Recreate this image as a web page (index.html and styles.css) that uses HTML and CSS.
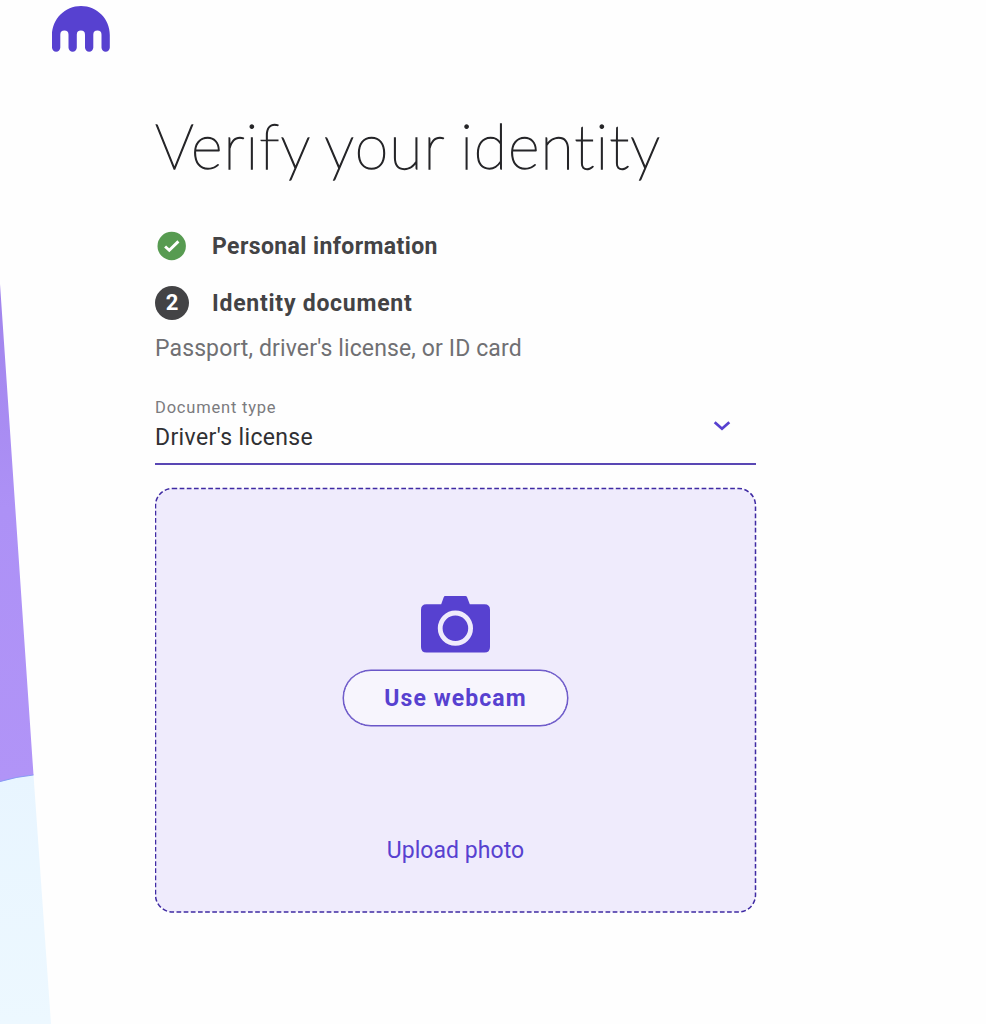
FILE: index.html
```html
<!DOCTYPE html>
<html lang="en">
<head>
<meta charset="utf-8">
<title>Verify your identity</title>
<link rel="stylesheet" href="styles.css">
</head>
<body>
<svg class="backdrop" viewBox="0 0 60 1024" aria-hidden="true">
  <defs>
    <linearGradient id="violet" x1="0" y1="0" x2="0" y2="1"><stop offset="0" stop-color="#a184ec"/><stop offset=".45" stop-color="#ad91f6"/><stop offset="1" stop-color="#b194f7"/></linearGradient>
    <linearGradient id="sky" x1="0" y1="0" x2="0" y2="1"><stop offset="0" stop-color="#e8f5ff"/><stop offset="1" stop-color="#edf8ff"/></linearGradient>
  </defs>
  <path d="M0 284L33.5 775Q17 777 0 782Z" fill="url(#violet)"/>
  <path d="M0 782Q17 777 33.5 775L51 1024H0Z" fill="url(#sky)"/>
  <path d="M0 781.5Q17 776.5 33.5 775" fill="none" stroke="#879cf5"/>
</svg>
<header class="header">
  <svg class="logo" viewBox="0 0 58 46" role="img" aria-label="Kraken">
    <path fill="#5741d0" d="M29 0C13 0 0 13 0 29V41.500a4.150 4.150 0 0 0 8.300 0V28.700a4.100 4.100 0 0 1 8.200 0V41.500a4.150 4.150 0 0 0 8.300 0V28.700a4.100 4.100 0 0 1 8.200 0V41.500a4.150 4.150 0 0 0 8.300 0V28.700a4.100 4.100 0 0 1 8.200 0V41.500a4.150 4.150 0 0 0 8.300 0V29C58 13 45 0 29 0Z"/>
  </svg>
</header>
<main class="content">
  <h1 class="title">Verify your identity</h1>
  <ol class="steps">
    <li class="step">
      <svg class="marker" viewBox="0 0 34 34" aria-hidden="true"><circle cx="16.700" cy="17" r="14.200" fill="#579b51"/><path d="M10.100 17.500L14.300 21.300L23.400 12.400" fill="none" stroke="#fff" stroke-width="2.900"/></svg>
      <span class="label label-done">Personal information</span>
    </li>
    <li class="step">
      <span class="marker number">2</span>
      <span class="label label-current">Identity document</span>
    </li>
  </ol>
  <p class="hint">Passport, driver's license, or ID card</p>
  <div class="select">
    <div class="select-text">
      <span class="select-label">Document type</span>
      <span class="select-value">Driver's license</span>
    </div>
    <svg class="chevron" viewBox="0 0 18 12" aria-hidden="true"><path d="M1.700 2.300L9 8.700L16.300 2.300" fill="none" stroke="#5741d0" stroke-width="2.800"/></svg>
  </div>
  <section class="dropzone">
    <svg class="outline" viewBox="0 0 602 426" aria-hidden="true"><rect x=".5" y="1.500" width="600" height="423.500" rx="17" fill="#efebfc" stroke="#3f2ba3" stroke-width="1.500" stroke-dasharray="4.700 2.450"/></svg>
    <svg class="camera" viewBox="0 0 69 57" aria-hidden="true"><path fill="#5741d0" d="M24 0H44.500Q45.500 0 46 1L48.800 8.200H63.500Q69 8.200 69 13.700V51Q69 56.500 63.500 56.500H5.500Q0 56.500 0 51V13.700Q0 8.200 5.500 8.200H20.200L22.800 1Q23.200 0 24 0Z"/><circle cx="34.400" cy="32.200" r="15.200" fill="none" stroke="#efebfc" stroke-width="4.800"/></svg>
    <button class="webcam">Use webcam</button>
    <a class="upload">Upload photo</a>
  </section>
</main>
</body>
</html>
```
FILE: styles.css
```css
* { box-sizing: border-box; }
body {
  margin: 0;
  height: 1024px;
  overflow: hidden;
  background: #fefefe;
  font-family: Roboto, "Liberation Sans", sans-serif;
  color: #303033;
}
.backdrop { position: absolute; left: 0; top: 0; width: 60px; height: 1024px; }
.header { height: 100px; padding: 6px 0 0 52px; }
.logo { display: block; width: 58px; height: 46px; }
.content { width: 601px; margin-left: 155px; }
.title {
  margin: 0;
  height: 129px;
  padding-top: 8px;
  font: 100 61px/76px Lato, sans-serif;
  letter-spacing: 1.05px;
  word-spacing: -2.5px;
  white-space: nowrap;
  color: #252528;
  -webkit-text-stroke: 1.3px #252528;
}
.steps { margin: 0; padding: 0; list-style: none; display: flex; flex-direction: column; gap: 23px; }
.step { display: flex; align-items: center; gap: 23px; height: 34px; }
.marker { width: 34px; height: 34px; flex: none; }
.number {
  border-radius: 50%;
  background: #434345;
  color: #fff;
  font-size: 22px;
  font-weight: 700;
  line-height: 34px;
  text-align: center;
}
.label { font-size: 23px; font-weight: 700; color: #434345; white-space: nowrap; }
.label-done { letter-spacing: .4px; }
.label-current { letter-spacing: .75px; }
.hint { margin: 14px 0 0; font-size: 23px; line-height: 30px; letter-spacing: .12px; color: #707073; white-space: nowrap; }
.select {
  display: flex;
  justify-content: space-between;
  height: 68px;
  margin-top: 33px;
  padding-right: 25px;
  border-bottom: 2px solid #5947b4;
}
.select-text { display: flex; flex-direction: column; }
.select-label { font-size: 16.5px; line-height: 22px; letter-spacing: .8px; color: #7b7b7e; }
.select-value { margin-top: 4px; font-size: 23px; line-height: 30px; letter-spacing: .35px; }
.chevron { width: 18px; height: 12px; margin-top: 23px; }
.dropzone {
  position: relative;
  display: flex;
  flex-direction: column;
  align-items: center;
  height: 426px;
  margin-top: 22px;
  padding-top: 109px;
}
.outline { position: absolute; left: 0; top: 0; width: 602px; height: 426px; }
.camera, .webcam, .upload { position: relative; }
.camera { width: 69px; height: 57px; }
.webcam {
  width: 225px;
  height: 56px;
  margin-top: 17px;
  padding: 2px 0 0;
  border: 1px solid #6a56c8;
  border-radius: 28px;
  box-shadow: 0 0 0 .5px #6a56c8;
  background: #f7f5fd;
  color: #5741d0;
  font: 700 23px/52px Roboto, sans-serif;
  letter-spacing: 1.1px;
}
.upload { margin-top: 110px; font-size: 23px; line-height: 30px; letter-spacing: .05px; color: #5741d0; }
```
